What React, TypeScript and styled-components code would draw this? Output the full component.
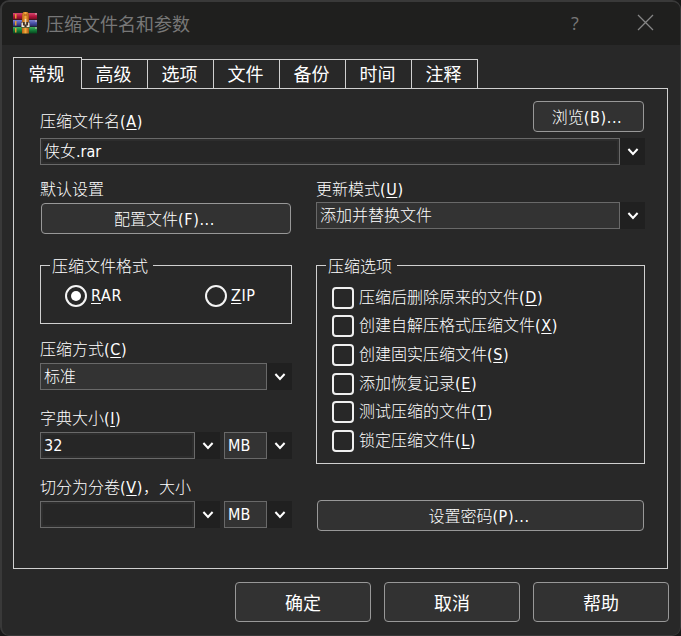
import React from "react";
import styled, { createGlobalStyle } from "styled-components";

const GlobalStyle = createGlobalStyle`
  * { box-sizing: border-box; }
  body {
    margin: 0;
    background: #181818;
    color: #fff;
    font: 300 16px/20px "DejaVu Sans Condensed", "Noto Sans CJK SC", sans-serif;
  }
  u { text-underline-offset: 2px; text-decoration-thickness: 1px; }
`;

const Dialog = styled.main`
  width: 681px;
  height: 636px;
  border: 2px solid #393939;
  border-right-width: 1px;
  border-bottom-width: 1px;
  border-radius: 9px;
  background: #282828;
  overflow: hidden;
  white-space: nowrap;
`;

const TitleBar = styled.header`
  display: flex;
  align-items: center;
  height: 43px;
  padding: 0 26px 2px 10px;
  background: #1f1f1e;
  color: #777;
`;

const Title = styled.h1`
  flex: 1;
  margin: 0 0 0 8px;
  font: 400 18px/26px "Noto Sans CJK SC", sans-serif;
`;

const HelpMark = styled.span`
  width: 12px;
  margin-right: 56px;
  font: 400 18px/24px "Open Sans", sans-serif;
  text-align: center;
`;

const TabStrip = styled.nav`
  display: flex;
  align-items: flex-end;
  height: 44px;
  padding-left: 11px;
`;

const Tab = styled.div<{ $active?: boolean }>`
  width: ${(p) => (p.$active ? 69 : 66)}px;
  height: ${(p) => (p.$active ? 32 : 30)}px;
  padding: ${(p) => (p.$active ? 2 : 0)}px 2px 0 0;
  border: solid #d0d0d0;
  border-width: ${(p) => (p.$active ? "1px 1px 0 1px" : "1px 1px 1px 0")};
  background: #282828;
  font: 400 18px/27px "Noto Sans CJK SC", sans-serif;
  text-align: center;
`;

const PanelTop = styled.div`
  flex: 1;
  height: 1px;
  margin-right: 12px;
  background: #d0d0d0;
`;

const Panel = styled.section`
  width: 655px;
  height: 480px;
  margin-left: 11px;
  padding: 12px 22px 0 26px;
  border: 1px solid #d0d0d0;
  border-top: 0;
`;

const NameRow = styled.div`
  display: flex;
  justify-content: space-between;
  height: 37px;
  padding-right: 1px;
`;

const Columns = styled.div`
  display: grid;
  grid-template-columns: 252px 329px;
  column-gap: 24px;
`;

const Column = styled.div`
  display: flex;
  flex-direction: column;
`;

const Latin = styled.span`
  letter-spacing: 0.6px;
`;

const Label = styled.div<{ $top?: number; $bottom?: number }>`
  height: 20px;
  margin-top: ${(p) => p.$top ?? 0}px;
  margin-bottom: ${(p) => p.$bottom ?? 3}px;
`;

const Button = styled.button<{ $w: number; $large?: boolean }>`
  width: ${(p) => p.$w}px;
  height: ${(p) => (p.$large ? 40 : 31)}px;
  flex: none;
  padding: ${(p) => (p.$large ? "0 0 1px" : "2px 3px 0 0")};
  border: 1px solid #989898;
  border-radius: 4px;
  background: #323232;
  color: #fff;
  font: ${(p) =>
    p.$large
      ? '400 18px/26px "Noto Sans CJK SC", sans-serif'
      : '300 16px/20px "DejaVu Sans Condensed", "Noto Sans CJK SC", sans-serif'};
`;

const ComboRow = styled.div`
  display: flex;
  height: 27px;
`;

const Field = styled.div<{ $w: number; $editable?: boolean }>`
  width: ${(p) => p.$w}px;
  padding: 3px 0 0 3px;
  border: 1px solid #696969;
  background: ${(p) => (p.$editable ? "#262626" : "#333")};
  box-shadow: ${(p) => (p.$editable ? "inset 0 0 0 2px #2d2d2d" : "none")};
`;

const DropButton = styled.div`
  display: flex;
  align-items: center;
  justify-content: center;
  width: 25px;
  background: #202020;
`;

const Spacer = styled.div<{ $size: number }>`
  width: ${(p) => p.$size}px;
  height: ${(p) => p.$size}px;
`;

const Group = styled.fieldset<{ $h: number }>`
  height: ${(p) => p.$h}px;
  min-width: 0;
  margin: 0;
  padding: 0 15px;
  border: 1px solid #d0d0d0;
`;

const Legend = styled.legend`
  height: 21px;
  margin-left: -6px;
  padding: 1px 5px 0 2px;
  line-height: 21px;
`;

const RadioRow = styled.div`
  display: grid;
  grid-template-columns: 140px 1fr;
  padding: 9px 0 0 9px;
`;

const Choice = styled.div<{ $h: number; $gap: number }>`
  display: flex;
  align-items: center;
  gap: ${(p) => p.$gap}px;
  height: ${(p) => p.$h}px;
`;

const Radio = styled.span`
  display: grid;
  place-items: center;
  width: 22px;
  height: 22px;
  border: 2px solid #f4f4f4;
  border-radius: 50%;
`;

const RadioDot = styled.span`
  width: 10px;
  height: 10px;
  border-radius: 50%;
  background: #fff;
`;

const Checkbox = styled.span`
  width: 22px;
  height: 22px;
  border: 2px solid #efefef;
  border-radius: 4px;
`;

const CheckList = styled.div`
  padding-top: 7.5px;
`;

const Footer = styled.footer`
  display: flex;
  justify-content: flex-end;
  gap: 13px;
  padding: 13px 11px 0 0;
`;

const Hotkey = ({ k }: { k: string }) => <Latin>(<u>{k}</u>)</Latin>;

const Chevron = () => (
  <DropButton>
    <svg width="12" height="8" viewBox="0 0 12 8" fill="none" stroke="#fff" strokeWidth="2">
      <path d="M1.4 1 6 6 10.6 1" />
    </svg>
  </DropButton>
);

const Combo = ({ w, value, editable }: { w: number; value?: React.ReactNode; editable?: boolean }) => (
  <>
    <Field $w={w} $editable={editable}>{value}</Field>
    <Chevron />
  </>
);

const ArchiveIcon = () => (
  <svg width="26" height="24" viewBox="0 0 26 24">
    <defs>
      <linearGradient id="red" x2="0" y2="1"><stop stopColor="#d84a72" /><stop offset=".5" stopColor="#b3163e" /><stop offset="1" stopColor="#6e0c22" /></linearGradient>
      <linearGradient id="blue" x2="0" y2="1"><stop stopColor="#7d83cf" /><stop offset=".5" stopColor="#4850a8" /><stop offset="1" stopColor="#25295f" /></linearGradient>
      <linearGradient id="green" x2="0" y2="1"><stop stopColor="#43b05a" /><stop offset=".5" stopColor="#15803a" /><stop offset="1" stopColor="#07451d" /></linearGradient>
      <linearGradient id="belt"><stop stopColor="#b85e16" /><stop offset=".5" stopColor="#f2aa3c" /><stop offset="1" stopColor="#a34f12" /></linearGradient>
    </defs>
    <path fill="url(#red)" d="M1 2h24v6.5H1z" />
    <path fill="url(#blue)" d="M1 9h24v6.5H1z" />
    <path fill="url(#green)" d="M1 16h24v6.5H1z" />
    <path fill="#e39a35" d="M3 3h1.5v4.5H3zM3 10h1.5v4.5H3zM3 17h1.5v4.5H3z" />
    <path fill="#c9b9b9" d="M23 2.5h2v1h-2zM23 9.5h2v1h-2zM23 16.5h2v1h-2z" />
    <path fill="url(#belt)" d="M10 3 11.5 1h4L17 3v8h-7zM10 16.5h7v6h-7z" />
    <path fill="#433126" d="M9 11h9v5.5H9z" />
    <path fill="none" stroke="#f1eee6" strokeWidth="1.4" d="M10.2 11.5v3.8h2.2M16.8 11.5v3.8h-2.2" />
    <path fill="#e7d7b8" d="M12.8 8h1.4v5.5h-1.4z" />
    <path fill="#9b4b15" d="M12 3.5h3v1h-3z" />
  </svg>
);

const tabs = ["常规", "高级", "选项", "文件", "备份", "时间", "注释"];

const options = [
  ["压缩后删除原来的文件", "D"],
  ["创建自解压格式压缩文件", "X"],
  ["创建固实压缩文件", "S"],
  ["添加恢复记录", "E"],
  ["测试压缩的文件", "T"],
  ["锁定压缩文件", "L"],
];

export default function App() {
  return (
    <>
      <GlobalStyle />
      <Dialog>
        <TitleBar>
          <ArchiveIcon />
          <Title>压缩文件名和参数</Title>
          <HelpMark>?</HelpMark>
          <svg width="17" height="17" viewBox="0 0 17 17" stroke="#858585" strokeWidth="1.3">
            <path d="m1 1 15 15M16 1 1 16" />
          </svg>
        </TitleBar>
        <TabStrip>
          {tabs.map((name, i) => <Tab key={name} $active={i === 0}>{name}</Tab>)}
          <PanelTop />
        </TabStrip>
        <Panel>
          <NameRow>
            <Label $top={11}>压缩文件名<Hotkey k="A" /></Label>
            <Button $w={111}>浏览<Latin>(B)...</Latin></Button>
          </NameRow>
          <ComboRow><Combo w={580} value="侠女.rar" editable /></ComboRow>
          <Columns>
            <Column>
              <Label $top={15}>默认设置</Label>
              <ComboRow><Spacer $size={1} /><Button $w={250}>配置文件<Latin>(F)...</Latin></Button></ComboRow>
              <Spacer $size={25} />
              <Group $h={69}>
                <Legend>压缩文件格式</Legend>
                <RadioRow>
                  <Choice $h={22} $gap={4}><Radio><RadioDot /></Radio><Latin><u>R</u>AR</Latin></Choice>
                  <Choice $h={22} $gap={4}><Radio /><Latin><u>Z</u>IP</Latin></Choice>
                </RadioRow>
              </Group>
              <Label $top={16}>压缩方式<Hotkey k="C" /></Label>
              <ComboRow><Combo w={227} value="标准" /></ComboRow>
              <Label $top={19}>字典大小<Hotkey k="I" /></Label>
              <ComboRow>
                <Combo w={155} value="32" editable /><Spacer $size={4} /><Combo w={43} value="MB" />
              </ComboRow>
              <Label $top={19}>切分为分卷<Hotkey k="V" />，大小</Label>
              <ComboRow>
                <Combo w={155} editable /><Spacer $size={4} /><Combo w={43} value="MB" />
              </ComboRow>
            </Column>
            <Column>
              <Label $top={15} $bottom={2}>更新模式<Hotkey k="U" /></Label>
              <ComboRow><Combo w={304} value="添加并替换文件" /></ComboRow>
              <Spacer $size={26} />
              <Group $h={209}>
                <Legend>压缩选项</Legend>
                <CheckList>
                  {options.map(([text, key]) => (
                    <Choice key={key} $h={28.6} $gap={5}>
                      <Checkbox /><span>{text}<Hotkey k={key} /></span>
                    </Choice>
                  ))}
                </CheckList>
              </Group>
              <Spacer $size={36} />
              <ComboRow><Spacer $size={1} /><Button $w={327}>设置密码<Latin>(P)...</Latin></Button></ComboRow>
            </Column>
          </Columns>
        </Panel>
        <Footer>
          <Button $w={136} $large>确定</Button>
          <Button $w={136} $large>取消</Button>
          <Button $w={136} $large>帮助</Button>
        </Footer>
      </Dialog>
    </>
  );
}
